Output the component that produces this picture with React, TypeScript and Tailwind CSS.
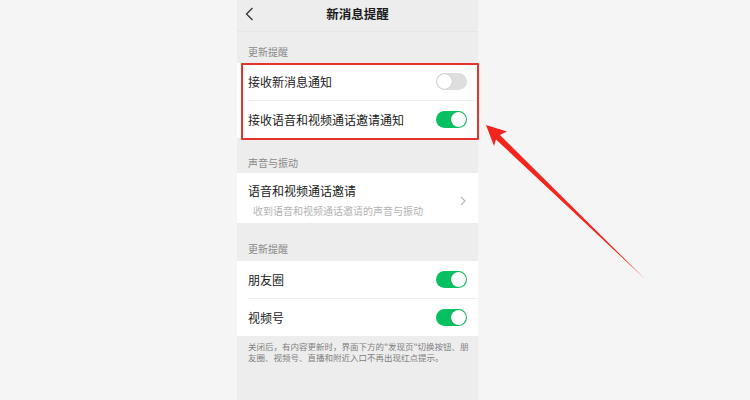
import React from 'react';

const font = { fontFamily: '"Noto Sans CJK SC", "Noto Sans", sans-serif' };

function Toggle({ on }: { on: boolean }) {
  return (
    <div
      className={`relative w-[31px] h-[17px] rounded-full ${on ? 'bg-[#07c160]' : 'bg-[#dedede]'}`}
    >
      <div
        className={`absolute top-[1px] w-[15px] h-[15px] rounded-full bg-white shadow-[0_0_1px_rgba(0,0,0,0.35)] ${
          on ? 'right-[1px]' : 'left-[1px]'
        }`}
      />
    </div>
  );
}

function SwitchRow({ label, on, divider }: { label: string; on: boolean; divider?: boolean }) {
  return (
    <div className="relative h-[37px] flex items-center justify-between pl-[11px] pr-[11px]">
      <span className="text-[12px] leading-[16px] text-[#1a1a1a]">{label}</span>
      <Toggle on={on} />
      {divider && <div className="absolute left-[11px] right-0 bottom-[-1px] h-px bg-[#efefef]" />}
    </div>
  );
}

function SectionLabel({ text, pt, pb }: { text: string; pt: string; pb: string }) {
  return (
    <div className={`${pt} ${pb} pl-[11px] text-[10px] leading-[14px] text-[#8a8a8a]`}>{text}</div>
  );
}

export default function App() {
  return (
    <div className="relative w-[750px] h-[400px] bg-[#f5f5f5] overflow-hidden" style={font}>
      <div className="ml-[237px] w-[241px] h-[400px] bg-[#ededed]">
        {/* Header */}
        <div className="relative h-[32px] pb-[3px] flex items-center justify-center border-b border-[#e6e6e6]">
          <svg
            className="absolute left-[8px] top-[7px]"
            width="9"
            height="14"
            viewBox="0 0 9 14"
            fill="none"
          >
            <polyline points="7.5,1 1.5,7 7.5,13" stroke="#333" strokeWidth="1.3" />
          </svg>
          <span className="text-[12.5px] font-bold text-[#1a1a1a]">新消息提醒</span>
        </div>

        <SectionLabel text="更新提醒" pt="pt-[13px]" pb="pb-[4px]" />
        <div className="bg-white">
          <SwitchRow label="接收新消息通知" on={false} divider />
          <div className="h-px" />
          <SwitchRow label="接收语音和视频通话邀请通知" on={true} />
        </div>

        <SectionLabel text="声音与振动" pt="pt-[18px]" pb="pb-[3px]" />
        <div className="bg-white pl-[11px] pr-[12px] pt-[10px] pb-[5px] flex items-center justify-between">
          <div className="flex flex-col">
            <span className="text-[12px] leading-[16px] text-[#1a1a1a]">语音和视频通话邀请</span>
            <span className="mt-[5px] pl-[5px] text-[10px] leading-[14px] text-[#b3b3b3]">
              收到语音和视频通话邀请的声音与振动
            </span>
          </div>
          <svg width="6" height="10" viewBox="0 0 6 10" fill="none">
            <polyline points="1,1 5,5 1,9" stroke="#b8b8b8" strokeWidth="1.1" />
          </svg>
        </div>

        <SectionLabel text="更新提醒" pt="pt-[19px]" pb="pb-[5px]" />
        <div className="bg-white">
          <SwitchRow label="朋友圈" on={true} divider />
          <div className="h-px" />
          <SwitchRow label="视频号" on={true} />
        </div>

        <div className="pt-[5px] pl-[11px] pr-[9px] text-[8.5px] leading-[10.5px] text-[#7f7f7f]">
          关闭后，有内容更新时，界面下方的"发现页"切换按钮、朋友圈、视频号、直播和附近入口不再出现红点提示。
        </div>
      </div>

      {/* Annotation: red box */}
      <div className="absolute left-[241px] top-[63px] w-[238px] h-[77px] border-2 border-[#e3342b] rounded-[1px]" />

      {/* Annotation: arrow */}
      <svg className="absolute left-0 top-0" width="750" height="400" viewBox="0 0 750 400">
        <polygon
          points="486,125 507,131.5 500,135 645,279 496,139.5 494,146"
          fill="#f2261c"
        />
      </svg>
    </div>
  );
}
